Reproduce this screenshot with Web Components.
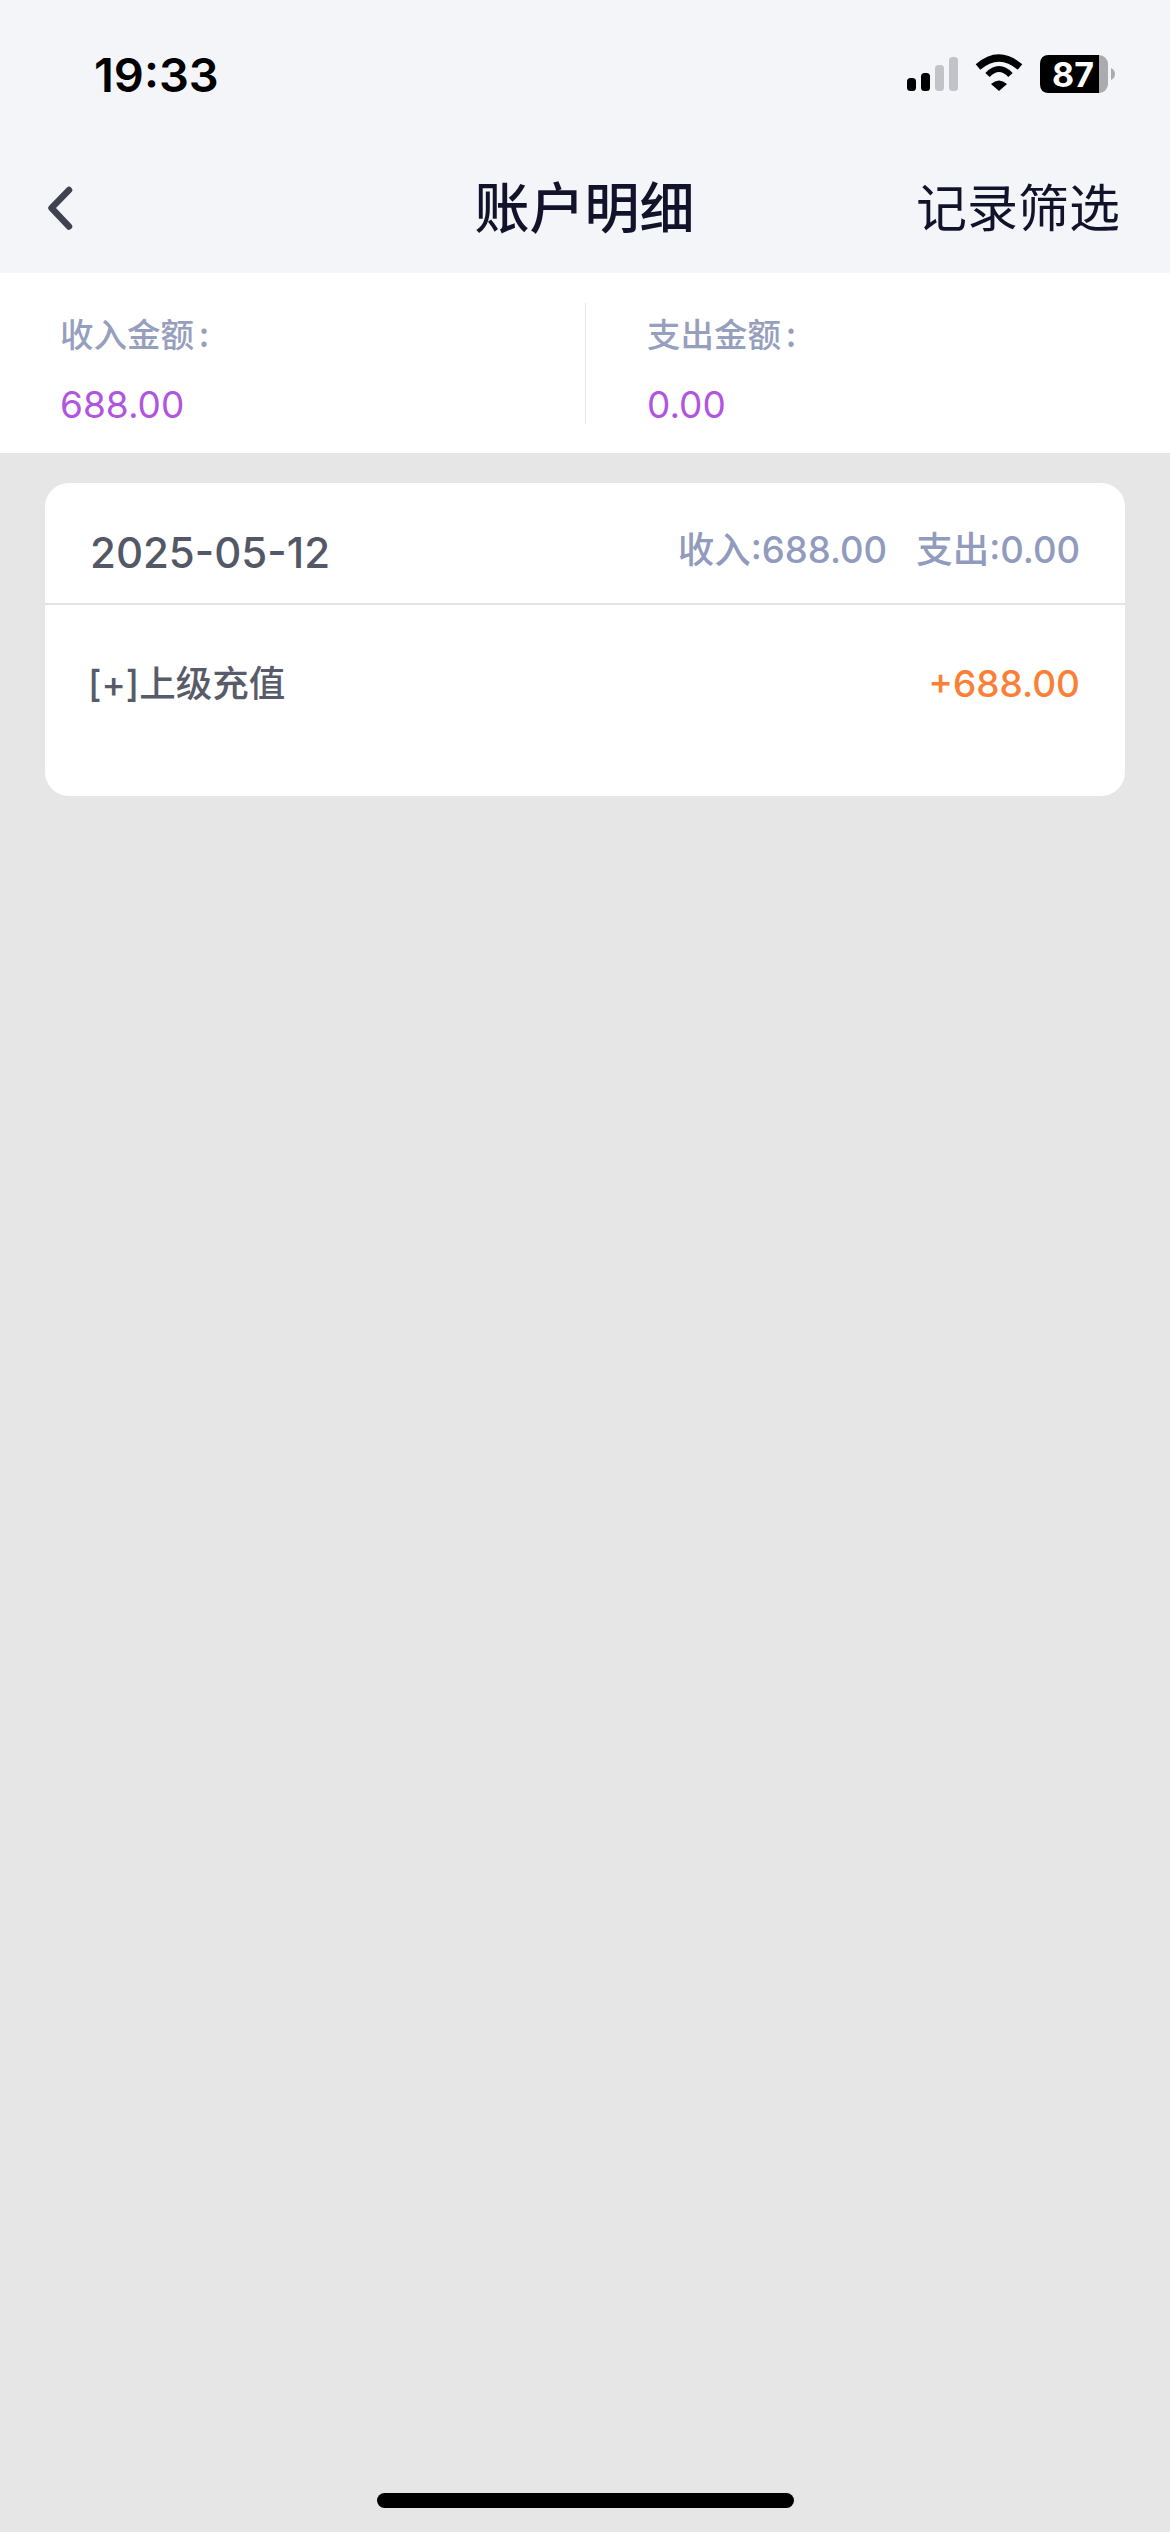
<!DOCTYPE html>
<html lang="zh">
<head>
<meta charset="utf-8">
<title>账户明细</title>
<style>
html, body { margin: 0; padding: 0; }
body {
  width: 1170px;
  height: 2532px;
  overflow: hidden;
  background: #e6e6e6;
  font-family: Inter, "Noto Sans CJK SC", sans-serif;
  position: relative;
}
</style>
</head>
<body>
<page-header></page-header>
<summary-bar></summary-bar>
<day-card date="2025-05-12" income="688.00" expense="0.00">
  <detail-row name="[+]上级充值" amount="+688.00"></detail-row>
</day-card>
<home-bar></home-bar>

<script>
class PageHeader extends HTMLElement {
    constructor() {
        super();
        this.attachShadow({ mode: "open" });
        this.shadowRoot.innerHTML = `
<style>
:host { display: block; height: 273px; background: #f4f5f9; }
.status {
  height: 148px;
  padding: 0 55px 2px 94px;
  display: flex;
  align-items: center;
  justify-content: space-between;
}
.time { font: 600 47px/1 Inter, sans-serif; color: #000; }
.icons { display: block; }
.nav {
  height: 113px;
  display: grid;
  grid-template-columns: 1fr auto 1fr;
  align-items: center;
  padding: 0 50px 0 46px;
}
.back { display: block; }
h1 { margin: 0 0 5px 3px; font: 500 55px/1 "Noto Sans CJK SC", sans-serif; color: #12132b; }
.filter { justify-self: end; margin-bottom: 3px; font: 400 51px/1 "Noto Sans CJK SC", sans-serif; color: #12132b; }
</style>
<div class="status">
  <span class="time">19:33</span>
  <svg class="icons" width="208" height="46" viewBox="0 -4 208 46">
    <rect x="0" y="23" width="9" height="13" rx="3.5" fill="#000"/>
    <rect x="14" y="18" width="9" height="18" rx="3.5" fill="#000"/>
    <rect x="28" y="10" width="9" height="26" rx="3.5" fill="#c2c3c8"/>
    <rect x="42" y="2" width="9" height="34" rx="3.5" fill="#c2c3c8"/>
    <path d="M71 12 Q92 -6 113 12" fill="none" stroke="#000" stroke-width="7"/>
    <path d="M80.5 20 Q92 8 103.5 20" fill="none" stroke="#000" stroke-width="6"/>
    <path d="M84 29 Q92 22 100 29 L92 36 Z" fill="#000"/>
    <rect x="133" y="0" width="68" height="38" rx="9" fill="#a9abae"/>
    <path d="M142 0 H192 V38 H142 Q133 38 133 29 V9 Q133 0 142 0 Z" fill="#000"/>
    <path d="M204 13 Q208 15 208 19 Q208 23 204 25 Z" fill="#a9abae"/>
    <text x="166" y="31.5" text-anchor="middle" font-family="Inter, sans-serif" font-weight="700" font-size="34" fill="#fff">87</text>
  </svg>
</div>
<div class="nav">
  <svg class="back" width="34" height="48" viewBox="0 0 34 48">
    <path d="M23 7 L5.5 25 L23 43.5" fill="none" stroke="#40434f" stroke-width="6.5" stroke-linecap="round" stroke-linejoin="round"/>
  </svg>
  <h1>账户明细</h1>
  <span class="filter">记录筛选</span>
</div>`;
    }
}

class SummaryBar extends HTMLElement {
    constructor() {
        super();
        this.attachShadow({ mode: "open" });
        this.shadowRoot.innerHTML = `
<style>
:host {
  display: grid;
  grid-template-columns: 585px 1fr;
  height: 180px;
  padding: 30px 0 29px;
  box-sizing: border-box;
  background: #fff;
}
.col { padding-left: 60px; }
.col + .col { border-left: 1px solid #e6e6ea; padding-left: 61px; }
.label { font: 500 33.5px/1 "Noto Sans CJK SC", sans-serif; color: #979fbe; margin-top: 13px; }
.label i { font-style: normal; margin-left: 5px; }
.value { font: 400 37px/1 Inter, sans-serif; color: #b155e0; margin-top: 36px; }
</style>
<div class="col"><div class="label">收入金额<i>:</i></div><div class="value">688.00</div></div>
<div class="col"><div class="label">支出金额<i>:</i></div><div class="value">0.00</div></div>`;
    }
}

class DayCard extends HTMLElement {
    constructor() {
        super();
        this.attachShadow({ mode: "open" });
        this.shadowRoot.innerHTML = `
<style>
:host {
  display: block;
  margin: 30px 45px 0;
  height: 313px;
  background: #fff;
  border-radius: 24px;
  font-family: Inter, "Noto Sans CJK SC", sans-serif;
}
.head {
  height: 122px;
  box-sizing: border-box;
  border-bottom: 2px solid #e3e3e3;
  display: flex;
  align-items: center;
  justify-content: space-between;
  padding: 8px 45px 0 45px;
}
.date { font-size: 42px; font-weight: 450; color: #545866; position: relative; top: 5px; }
.totals { display: flex; gap: 29px; font-size: 36.5px; font-weight: 450; color: #919bbd; position: relative; top: 0; }
</style>
<div class="head">
  <span class="date"></span>
  <div class="totals"><span class="inc"></span><span class="exp"></span></div>
</div>
<slot></slot>`;
        this.shadowRoot.querySelector(".date").textContent = this.getAttribute("date");
        this.shadowRoot.querySelector(".inc").textContent = "收入:" + this.getAttribute("income");
        this.shadowRoot.querySelector(".exp").textContent = "支出:" + this.getAttribute("expense");
    }
}

class DetailRow extends HTMLElement {
    constructor() {
        super();
        this.attachShadow({ mode: "open" });
        this.shadowRoot.innerHTML = `
<style>
:host {
  display: flex;
  justify-content: space-between;
  align-items: center;
  padding: 57px 45px 0 43px;
  font-family: Inter, "Noto Sans CJK SC", sans-serif;
}
.name { font-size: 36.5px; font-weight: 500; line-height: 44px; color: #585c6a; }
.amount { font-size: 37px; font-weight: 450; line-height: 44px; color: #fb7f35; }
</style>
<span class="name"></span><span class="amount"></span>`;
        this.shadowRoot.querySelector(".name").textContent = this.getAttribute("name");
        this.shadowRoot.querySelector(".amount").textContent = this.getAttribute("amount");
    }
}

class HomeBar extends HTMLElement {
    constructor() {
        super();
        this.attachShadow({ mode: "open" });
        this.shadowRoot.innerHTML = `
<style>
:host {
  position: absolute;
  left: 377px;
  bottom: 24px;
  width: 417px;
  height: 15px;
  border-radius: 8px;
  background: #000;
}
</style>`;
    }
}

customElements.define("page-header", PageHeader);
customElements.define("summary-bar", SummaryBar);
customElements.define("day-card", DayCard);
customElements.define("detail-row", DetailRow);
customElements.define("home-bar", HomeBar);
</script>
</body>
</html>
